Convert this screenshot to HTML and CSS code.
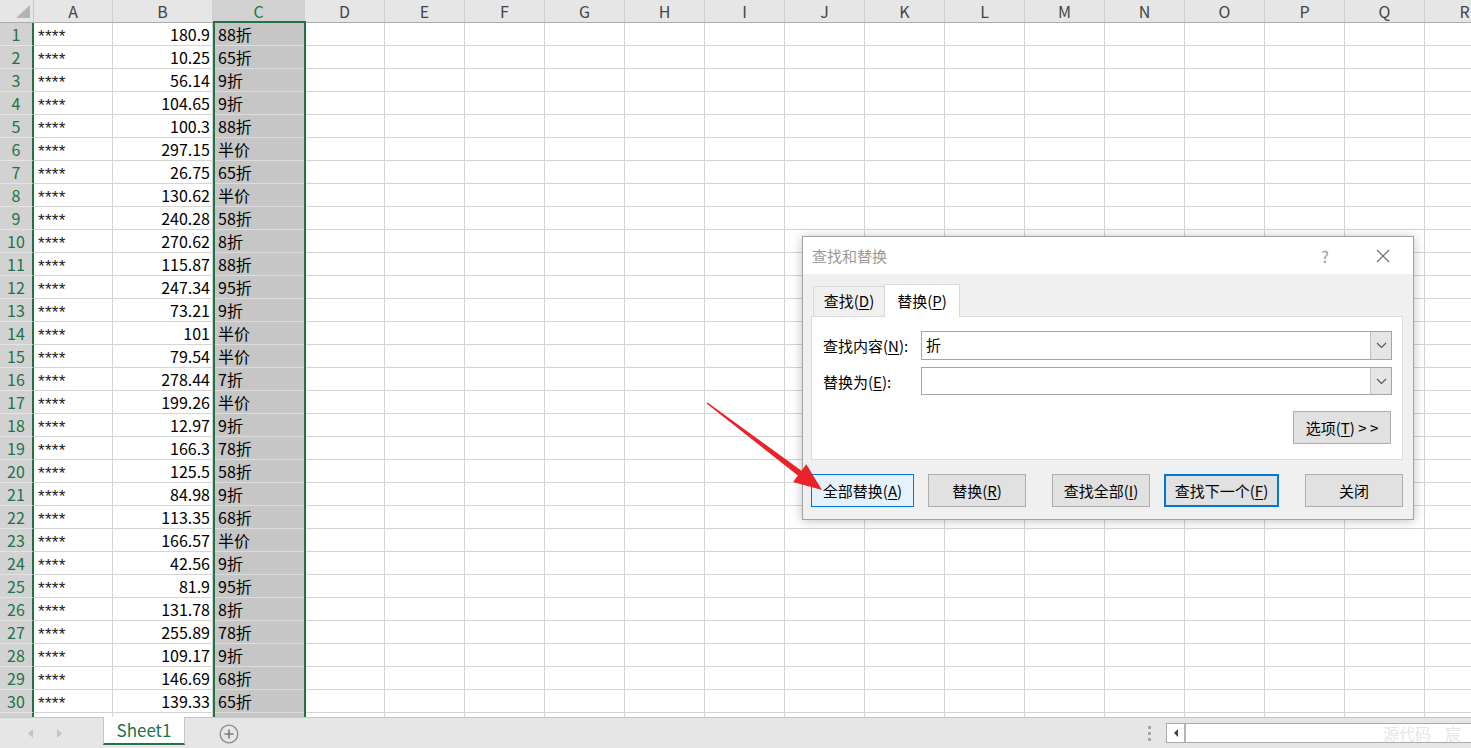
FILE: index.html
```html
<!DOCTYPE html>
<html lang="zh-CN">
<head>
<meta charset="utf-8">
<title>查找和替换</title>
<link rel="stylesheet" href="styles.css">
</head>
<body>
<div class="sheet">
  <div class="hrow">
    <div class="corner"><svg width="33" height="22" viewBox="0 0 33 22"><polygon points="16,18 30,18 30,5" fill="#b4b4b4"/></svg></div>
    <div class="ch wa">A</div><div class="ch wb">B</div><div class="ch wc sel">C</div>
    <div class="ch">D</div><div class="ch">E</div><div class="ch">F</div><div class="ch">G</div><div class="ch">H</div><div class="ch">I</div><div class="ch">J</div><div class="ch">K</div><div class="ch">L</div><div class="ch">M</div><div class="ch">N</div><div class="ch">O</div><div class="ch">P</div><div class="ch">Q</div><div class="ch">R</div>
  </div>
  <div class="row"><div class="rh">1</div><div class="c a"><span class="stars">****</span></div><div class="c b">180.9</div><div class="c cc">88折</div><div class="rest"></div></div>
  <div class="row"><div class="rh">2</div><div class="c a"><span class="stars">****</span></div><div class="c b">10.25</div><div class="c cc">65折</div><div class="rest"></div></div>
  <div class="row"><div class="rh">3</div><div class="c a"><span class="stars">****</span></div><div class="c b">56.14</div><div class="c cc">9折</div><div class="rest"></div></div>
  <div class="row"><div class="rh">4</div><div class="c a"><span class="stars">****</span></div><div class="c b">104.65</div><div class="c cc">9折</div><div class="rest"></div></div>
  <div class="row"><div class="rh">5</div><div class="c a"><span class="stars">****</span></div><div class="c b">100.3</div><div class="c cc">88折</div><div class="rest"></div></div>
  <div class="row"><div class="rh">6</div><div class="c a"><span class="stars">****</span></div><div class="c b">297.15</div><div class="c cc">半价</div><div class="rest"></div></div>
  <div class="row"><div class="rh">7</div><div class="c a"><span class="stars">****</span></div><div class="c b">26.75</div><div class="c cc">65折</div><div class="rest"></div></div>
  <div class="row"><div class="rh">8</div><div class="c a"><span class="stars">****</span></div><div class="c b">130.62</div><div class="c cc">半价</div><div class="rest"></div></div>
  <div class="row"><div class="rh">9</div><div class="c a"><span class="stars">****</span></div><div class="c b">240.28</div><div class="c cc">58折</div><div class="rest"></div></div>
  <div class="row"><div class="rh">10</div><div class="c a"><span class="stars">****</span></div><div class="c b">270.62</div><div class="c cc">8折</div><div class="rest"></div></div>
  <div class="row"><div class="rh">11</div><div class="c a"><span class="stars">****</span></div><div class="c b">115.87</div><div class="c cc">88折</div><div class="rest"></div></div>
  <div class="row"><div class="rh">12</div><div class="c a"><span class="stars">****</span></div><div class="c b">247.34</div><div class="c cc">95折</div><div class="rest"></div></div>
  <div class="row"><div class="rh">13</div><div class="c a"><span class="stars">****</span></div><div class="c b">73.21</div><div class="c cc">9折</div><div class="rest"></div></div>
  <div class="row"><div class="rh">14</div><div class="c a"><span class="stars">****</span></div><div class="c b">101</div><div class="c cc">半价</div><div class="rest"></div></div>
  <div class="row"><div class="rh">15</div><div class="c a"><span class="stars">****</span></div><div class="c b">79.54</div><div class="c cc">半价</div><div class="rest"></div></div>
  <div class="row"><div class="rh">16</div><div class="c a"><span class="stars">****</span></div><div class="c b">278.44</div><div class="c cc">7折</div><div class="rest"></div></div>
  <div class="row"><div class="rh">17</div><div class="c a"><span class="stars">****</span></div><div class="c b">199.26</div><div class="c cc">半价</div><div class="rest"></div></div>
  <div class="row"><div class="rh">18</div><div class="c a"><span class="stars">****</span></div><div class="c b">12.97</div><div class="c cc">9折</div><div class="rest"></div></div>
  <div class="row"><div class="rh">19</div><div class="c a"><span class="stars">****</span></div><div class="c b">166.3</div><div class="c cc">78折</div><div class="rest"></div></div>
  <div class="row"><div class="rh">20</div><div class="c a"><span class="stars">****</span></div><div class="c b">125.5</div><div class="c cc">58折</div><div class="rest"></div></div>
  <div class="row"><div class="rh">21</div><div class="c a"><span class="stars">****</span></div><div class="c b">84.98</div><div class="c cc">9折</div><div class="rest"></div></div>
  <div class="row"><div class="rh">22</div><div class="c a"><span class="stars">****</span></div><div class="c b">113.35</div><div class="c cc">68折</div><div class="rest"></div></div>
  <div class="row"><div class="rh">23</div><div class="c a"><span class="stars">****</span></div><div class="c b">166.57</div><div class="c cc">半价</div><div class="rest"></div></div>
  <div class="row"><div class="rh">24</div><div class="c a"><span class="stars">****</span></div><div class="c b">42.56</div><div class="c cc">9折</div><div class="rest"></div></div>
  <div class="row"><div class="rh">25</div><div class="c a"><span class="stars">****</span></div><div class="c b">81.9</div><div class="c cc">95折</div><div class="rest"></div></div>
  <div class="row"><div class="rh">26</div><div class="c a"><span class="stars">****</span></div><div class="c b">131.78</div><div class="c cc">8折</div><div class="rest"></div></div>
  <div class="row"><div class="rh">27</div><div class="c a"><span class="stars">****</span></div><div class="c b">255.89</div><div class="c cc">78折</div><div class="rest"></div></div>
  <div class="row"><div class="rh">28</div><div class="c a"><span class="stars">****</span></div><div class="c b">109.17</div><div class="c cc">9折</div><div class="rest"></div></div>
  <div class="row"><div class="rh">29</div><div class="c a"><span class="stars">****</span></div><div class="c b">146.69</div><div class="c cc">68折</div><div class="rest"></div></div>
  <div class="row"><div class="rh">30</div><div class="c a"><span class="stars">****</span></div><div class="c b">139.33</div><div class="c cc">65折</div><div class="rest"></div></div>
  <div class="row"><div class="rh"></div><div class="c a"></div><div class="c b"></div><div class="c cc"></div><div class="rest"></div></div>
  <div class="selbox"></div>
</div>

<div class="bar">
  <div class="navs"><svg width="103" height="30" viewBox="0 0 103 30"><polygon points="33,11 28,15.5 33,20" fill="#c4c4c4"/><polygon points="57,11 62,15.5 57,20" fill="#c4c4c4"/></svg></div>
  <div class="stab">Sheet1</div>
  <div class="plus"><svg width="20" height="20" viewBox="0 0 20 20"><circle cx="10" cy="10" r="8.8" fill="none" stroke="#8a8a8a" stroke-width="1.3"/><path d="M10 5.5v9M5.5 10h9" stroke="#7a7a7a" stroke-width="1.6"/></svg></div>
  <div class="spacer"></div>
  <div class="dots"><i></i><i></i><i></i></div>
  <div class="hscroll">
    <div class="sbtn"><svg width="8" height="10" viewBox="0 0 8 10"><polygon points="6,1 2,5 6,9" fill="#444"/></svg></div>
    <div class="wm">源代码<span class="wm2">宸</span></div>
  </div>
</div>

<div class="dlg">
  <div class="dlg-title">
    <span class="dlg-t">查找和替换</span>
    <span class="help">?</span>
    <span class="close"><svg width="14" height="14" viewBox="0 0 14 14"><path d="M1 1L13 13M13 1L1 13" stroke="#6e6e6e" stroke-width="1.2"/></svg></span>
  </div>
  <div class="tabs">
    <div class="tab">查找(<u>D</u>)</div>
    <div class="tab active">替换(<u>P</u>)</div>
  </div>
  <div class="panel">
    <div class="frow">
      <div class="lbl">查找内容(<u>N</u>):</div>
      <div class="inp"><div class="val">折</div><div class="dd"><svg width="11" height="7" viewBox="0 0 11 7"><path d="M1 1l4.5 4.5L10 1" fill="none" stroke="#555" stroke-width="1.1"/></svg></div></div>
    </div>
    <div class="frow f2">
      <div class="lbl">替换为(<u>E</u>):</div>
      <div class="inp"><div class="val"></div><div class="dd"><svg width="11" height="7" viewBox="0 0 11 7"><path d="M1 1l4.5 4.5L10 1" fill="none" stroke="#555" stroke-width="1.1"/></svg></div></div>
    </div>
    <div class="optrow"><div class="btn opt">选项(<u>T</u>) &gt; &gt;</div></div>
  </div>
  <div class="btns">
    <div class="btn b1 focus">全部替换(<u>A</u>)</div>
    <div class="btn b2">替换(<u>R</u>)</div>
    <div class="btn b3">查找全部(<u>I</u>)</div>
    <div class="btn b4 def">查找下一个(<u>F</u>)</div>
    <div class="btn b5">关闭</div>
  </div>
</div>

<svg class="arrow" width="1471" height="748" viewBox="0 0 1471 748"><polygon points="707.5,402.4 801.5,470.7 806.3,464.3 822,490 793.1,481.9 797.9,475.5 706.5,403.6" fill="#e8232a"/></svg>
</body>
</html>
```

FILE: styles.css
```css
html, body {
  margin: 0;
  padding: 0;
}
body {
  width: 1471px;
  height: 748px;
  overflow: hidden;
  position: relative;
  background: #fff;
  font-family: "Noto Sans CJK SC", "Noto Sans", sans-serif;
  color: #000;
}

/* ---------- sheet grid ---------- */
.sheet {
  height: 717px;
  overflow: hidden;
  position: relative;
}
.hrow {
  display: flex;
  height: 23px;
}
.hrow > div {
  flex: none;
  box-sizing: border-box;
  height: 23px;
  background: #e6e6e6;
  border-bottom: 1px solid #ababab;
}
.corner {
  width: 34px;
  border-right: 1px solid #c8c8c8;
}
.corner svg { display: block; }
.ch {
  width: 80px;
  border-right: 1px solid #cfcfcf;
  color: #444;
  font-size: 16px;
  line-height: 22px;
  text-align: center;
}
.ch.wa { width: 79px; }
.ch.wb { width: 100px; }
.ch.wc { width: 92px; }
.ch.sel {
  background: #d2d2d2;
  color: #217346;
}

.row {
  display: flex;
  height: 23px;
}
.rh {
  flex: none;
  box-sizing: border-box;
  width: 34px;
  height: 23px;
  background: #d2d2d2;
  color: #217346;
  border-right: 2px solid #217346;
  border-bottom: 1px solid #e4e4e4;
  font-size: 16px;
  line-height: 22px;
  text-align: center;
}
.c {
  flex: none;
  box-sizing: border-box;
  height: 23px;
  border-right: 1px solid #d4d4d4;
  border-bottom: 1px solid #d4d4d4;
  font-size: 16px;
  line-height: 22px;
  white-space: nowrap;
  overflow: hidden;
  color: #000;
}
.a {
  width: 79px;
  padding-left: 4px;
  display: flex;
  align-items: center;
}
.stars {
  font-family: "Liberation Sans", Arial, sans-serif;
  font-size: 17px;
  line-height: 12px;
  height: 12px;
  padding-top: 6px;
  letter-spacing: 0.3px;
  color: #222;
}
.b {
  width: 100px;
  text-align: right;
  padding-right: 2px;
}
.cc {
  width: 92px;
  padding-left: 5px;
  background: #c6c6c6;
  border-bottom-color: #dcdcdc;
}
.rest {
  flex: 1;
  box-sizing: border-box;
  height: 23px;
  border-bottom: 1px solid #d4d4d4;
  background: repeating-linear-gradient(to right, #fff 0 79px, #d4d4d4 79px 80px);
}
.selbox {
  position: absolute;
  left: 213px;
  top: 21px;
  width: 93px;
  height: 720px;
  box-sizing: border-box;
  border: 2px solid #217346;
}

/* ---------- bottom bar ---------- */
.bar {
  height: 30px;
  border-top: 1px solid #c6c6c6;
  background: #e6e6e6;
  display: flex;
}
.navs {
  width: 103px;
  flex: none;
}
.navs svg { display: block; }
.stab {
  flex: none;
  box-sizing: border-box;
  width: 82px;
  height: 28px;
  margin-top: -1px;
  background: #fff;
  border-left: 1px solid #c6c6c6;
  border-right: 1px solid #c6c6c6;
  border-bottom: 2px solid #217346;
  color: #217346;
  font-size: 17px;
  line-height: 26px;
  text-align: center;
}
.plus {
  flex: none;
  margin-left: 34px;
  margin-top: 6px;
}
.plus svg { display: block; }
.spacer { flex: 1; }
.dots {
  flex: none;
  width: 4px;
  margin-right: 14px;
  padding-top: 8px;
  display: flex;
  flex-direction: column;
  gap: 3px;
}
.dots i {
  display: block;
  width: 3px;
  height: 3px;
  background: #a6a6a6;
}
.hscroll {
  flex: none;
  box-sizing: border-box;
  width: 305px;
  height: 20px;
  margin-top: 5px;
  background: #fff;
  border: 1px solid #ababab;
  border-right: none;
  display: flex;
  align-items: center;
}
.sbtn {
  flex: none;
  box-sizing: border-box;
  width: 19px;
  height: 18px;
  border-right: 2px solid #b4b4b4;
  display: flex;
  align-items: center;
  justify-content: center;
}
.wm {
  margin-left: auto;
  margin-right: 10px;
  color: #e6e6e6;
  font-size: 16px;
  line-height: 18px;
}
.wm2 { margin-left: 14px; }

/* ---------- dialog ---------- */
.dlg {
  position: absolute;
  left: 802px;
  top: 236px;
  width: 612px;
  height: 284px;
  box-sizing: border-box;
  border: 1px solid #a3a3a3;
  background: #f0f0f0;
  box-shadow: 0 1px 10px rgba(0, 0, 0, 0.25);
  font-size: 15px;
  color: #000;
}
.dlg u { text-underline-offset: 2px; }
.dlg-title {
  height: 37px;
  background: #fff;
  display: flex;
  align-items: center;
  padding-left: 9px;
  padding-right: 7px;
  color: #999;
}
.dlg-t { flex: 1; }
.help {
  width: 30px;
  margin-right: 20px;
  text-align: center;
  color: #999;
  font-size: 16px;
}
.close {
  width: 46px;
  display: flex;
  justify-content: center;
}
.close svg { display: block; }
.tabs {
  display: flex;
  align-items: flex-end;
  height: 33px;
  margin: 10px 0 0 10px;
  position: relative;
  z-index: 1;
}
.tab {
  box-sizing: border-box;
  width: 71px;
  height: 30px;
  margin-bottom: 1px;
  border: 1px solid #d9d9d9;
  border-right: none;
  border-bottom: none;
  text-align: center;
  line-height: 28px;
}
.tab.active {
  width: 76px;
  height: 33px;
  margin-bottom: 0;
  background: #fff;
  border-right: 1px solid #d9d9d9;
  line-height: 31px;
}
.panel {
  box-sizing: border-box;
  width: 592px;
  height: 144px;
  margin: -1px 0 0 8px;
  background: #fff;
  border: 1px solid #d9d9d9;
  padding: 14px 10px 0 11px;
}
.frow {
  display: flex;
  align-items: center;
  height: 29px;
}
.frow.f2 {
  margin-top: 7px;
  height: 28px;
}
.lbl {
  width: 98px;
  flex: none;
}
.inp {
  flex: 1;
  box-sizing: border-box;
  height: 100%;
  border: 1px solid #a5a5a5;
  display: flex;
  background: #fff;
}
.val {
  flex: 1;
  padding-left: 4px;
  line-height: 26px;
}
.dd {
  width: 20px;
  background: #e5e5e5;
  border-left: 1px solid #c2c2c2;
  display: flex;
  align-items: center;
  justify-content: center;
}
.optrow {
  display: flex;
  justify-content: flex-end;
  margin-top: 16px;
  margin-right: 1px;
}
.btn {
  box-sizing: border-box;
  height: 33px;
  border: 1px solid #adadad;
  background: #e1e1e1;
  text-align: center;
  line-height: 31px;
  white-space: nowrap;
}
.btn.opt { width: 98px; }
.btns {
  display: flex;
  margin: 14px 0 0 8px;
}
.b1 { width: 103px; }
.b2 { width: 98px; margin-left: 14px; }
.b3 { width: 98px; margin-left: 26px; }
.b4 { width: 115px; margin-left: 14px; }
.b5 { width: 98px; margin-left: 26px; }
.btn.focus {
  background: #e5f1fb;
  border-color: #0078d7;
}
.btn.def {
  border: 2px solid #0078d7;
  line-height: 29px;
}

/* ---------- annotation arrow ---------- */
.arrow {
  position: absolute;
  left: 0;
  top: 0;
  pointer-events: none;
}
```
